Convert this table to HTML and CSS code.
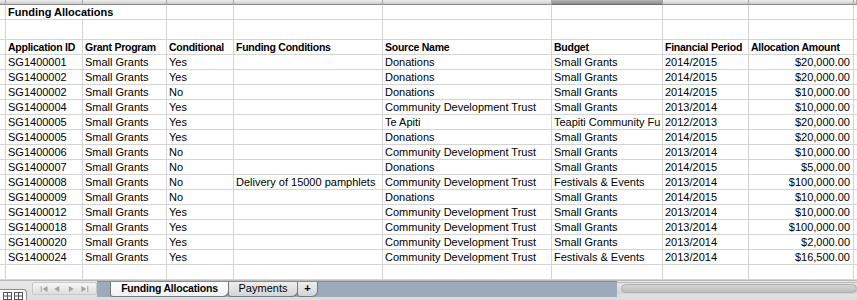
FILE: index.html
```html
<!DOCTYPE html>
<html>
<head>
<meta charset="utf-8">
<link rel="stylesheet" href="styles.css">
</head>
<body>
<div class="sheet">
  <div class="colhead">
    <div></div><div></div><div></div><div></div><div></div><div></div><div class="sel"></div><div></div><div></div><div class="last"></div>
  </div>
  <div class="row">
    <div></div><div class="span2 b">Funding Allocations</div><div></div><div></div><div></div><div></div><div></div><div></div><div class="last"></div>
  </div>
  <div class="row tall">
    <div></div><div></div><div></div><div></div><div></div><div></div><div></div><div></div><div></div><div class="last"></div>
  </div>
  <div class="row b head">
    <div></div><div>Application ID</div><div>Grant Program</div><div>Conditional</div><div>Funding Conditions</div><div>Source Name</div><div>Budget</div><div>Financial Period</div><div>Allocation Amount</div><div class="last"></div>
  </div>
  <div class="row"><div></div><div>SG1400001</div><div>Small Grants</div><div>Yes</div><div></div><div>Donations</div><div>Small Grants</div><div>2014/2015</div><div class="num">$20,000.00</div><div class="last"></div></div>
  <div class="row"><div></div><div>SG1400002</div><div>Small Grants</div><div>Yes</div><div></div><div>Donations</div><div>Small Grants</div><div>2014/2015</div><div class="num">$20,000.00</div><div class="last"></div></div>
  <div class="row"><div></div><div>SG1400002</div><div>Small Grants</div><div>No</div><div></div><div>Donations</div><div>Small Grants</div><div>2014/2015</div><div class="num">$10,000.00</div><div class="last"></div></div>
  <div class="row"><div></div><div>SG1400004</div><div>Small Grants</div><div>Yes</div><div></div><div>Community Development Trust</div><div>Small Grants</div><div>2013/2014</div><div class="num">$10,000.00</div><div class="last"></div></div>
  <div class="row"><div></div><div>SG1400005</div><div>Small Grants</div><div>Yes</div><div></div><div>Te Apiti</div><div>Teapiti Community Fu</div><div>2012/2013</div><div class="num">$20,000.00</div><div class="last"></div></div>
  <div class="row"><div></div><div>SG1400005</div><div>Small Grants</div><div>Yes</div><div></div><div>Donations</div><div>Small Grants</div><div>2014/2015</div><div class="num">$20,000.00</div><div class="last"></div></div>
  <div class="row"><div></div><div>SG1400006</div><div>Small Grants</div><div>No</div><div></div><div>Community Development Trust</div><div>Small Grants</div><div>2013/2014</div><div class="num">$10,000.00</div><div class="last"></div></div>
  <div class="row"><div></div><div>SG1400007</div><div>Small Grants</div><div>No</div><div></div><div>Donations</div><div>Small Grants</div><div>2014/2015</div><div class="num">$5,000.00</div><div class="last"></div></div>
  <div class="row"><div></div><div>SG1400008</div><div>Small Grants</div><div>No</div><div>Delivery of 15000 pamphlets</div><div>Community Development Trust</div><div>Festivals &amp; Events</div><div>2013/2014</div><div class="num">$100,000.00</div><div class="last"></div></div>
  <div class="row"><div></div><div>SG1400009</div><div>Small Grants</div><div>No</div><div></div><div>Donations</div><div>Small Grants</div><div>2014/2015</div><div class="num">$10,000.00</div><div class="last"></div></div>
  <div class="row"><div></div><div>SG1400012</div><div>Small Grants</div><div>Yes</div><div></div><div>Community Development Trust</div><div>Small Grants</div><div>2013/2014</div><div class="num">$10,000.00</div><div class="last"></div></div>
  <div class="row"><div></div><div>SG1400018</div><div>Small Grants</div><div>Yes</div><div></div><div>Community Development Trust</div><div>Small Grants</div><div>2013/2014</div><div class="num">$100,000.00</div><div class="last"></div></div>
  <div class="row"><div></div><div>SG1400020</div><div>Small Grants</div><div>Yes</div><div></div><div>Community Development Trust</div><div>Small Grants</div><div>2013/2014</div><div class="num">$2,000.00</div><div class="last"></div></div>
  <div class="row"><div></div><div>SG1400024</div><div>Small Grants</div><div>Yes</div><div></div><div>Community Development Trust</div><div>Festivals &amp; Events</div><div>2013/2014</div><div class="num">$16,500.00</div><div class="last"></div></div>
  <div class="row">
    <div></div><div></div><div></div><div></div><div></div><div></div><div></div><div></div><div></div><div class="last"></div>
  </div>

  <div class="tabbar">
    <div class="views">
      <svg width="22" height="8" viewBox="0 0 22 8"><g fill="none" stroke="#555" stroke-width="1"><rect x="0.5" y="0.5" width="8" height="7"/><path d="M4.5 0.5v7M0.5 4h8"/><rect x="11.5" y="0.5" width="8" height="7"/><path d="M15.5 0.5v7M11.5 4h8"/></g></svg>
    </div>
    <div class="nav">
      <svg width="65" height="13" viewBox="0 0 65 13"><g fill="#a3a3a3"><rect x="8" y="4" width="1" height="6"/><path d="M15 4l-5 3 5 3z"/><path d="M27 4l-5 3 5 3z"/><path d="M37 4l5 3-5 3z"/><path d="M50 4l5 3-5 3z"/><rect x="56" y="4" width="1" height="6"/></g></svg>
    </div>
    <div class="strip">
      <div class="tab active">Funding Allocations</div>
      <div class="tab pay">Payments</div>
      <div class="tab plus">+</div>
    </div>
    <div class="hscroll"><div class="thumb"></div></div>
  </div>
</div>
</body>
</html>
```
FILE: styles.css
```css
html, body {
  margin: 0;
  padding: 0;
}
body {
  font-family: "Liberation Sans", Arial, sans-serif;
  font-size: 11px;
  color: #000;
  background: #fff;
  width: 857px;
  height: 300px;
  overflow: hidden;
}
.sheet {
  display: flex;
  flex-direction: column;
}
.colhead, .row {
  display: grid;
  grid-template-columns: 6px 77px 84px 67px 149px 169px 111px 86px 105px 1fr;
}
.colhead {
  height: 5px;
}
.colhead > div {
  box-sizing: border-box;
  border-right: 1px solid #a8a8a8;
  border-bottom: 1px solid #8a8a8a;
  background: linear-gradient(#ececec, #cdcdcd);
}
.colhead > div.sel {
  background: linear-gradient(#b4b4b4, #8c8c8c);
  border-bottom-color: #6a6a6a;
}
.row {
  height: 15px;
}
.row.tall {
  height: 20px;
}
.row > div {
  box-sizing: border-box;
  border-right: 1px solid #d4d4d4;
  border-bottom: 1px solid #d4d4d4;
  padding: 0 2px;
  line-height: 14px;
  white-space: nowrap;
  overflow: hidden;
}
.row > div:first-child {
  padding: 0;
}
.row > div.last {
  border-right: none;
}
.row > .span2 {
  grid-column: span 2;
}
.b {
  font-weight: bold;
}
.head {
  font-size: 10.5px;
  letter-spacing: -0.25px;
}
.row > .num {
  text-align: right;
  padding-right: 3px;
}
.tabbar {
  display: flex;
  height: 20px;
  background: linear-gradient(#e9e9e9, #dcdcdc);
  border-top: 1px solid #b9b9b9;
  box-sizing: border-box;
}
.views {
  width: 27px;
  height: 11px;
  margin-top: auto;
  box-sizing: border-box;
  background: #fbfbfb;
  border-top: 1px solid #8e8e8e;
  border-right: 1px solid #8e8e8e;
  border-top-right-radius: 4px;
  padding: 2px 0 0 3px;
  display: flex;
}
.nav {
  width: 65px;
  height: 13px;
  margin: 1px 0 0 5px;
  background: linear-gradient(#f6f6f6, #dedede);
  border: 1px solid #c8c8c8;
  border-radius: 2px;
  box-sizing: border-box;
  display: flex;
  align-items: center;
}
.strip {
  width: 520px;
  height: 16px;
  background: #9cabbc;
  border-top: 1px solid #7f8ea0;
  box-sizing: border-box;
  display: flex;
  padding-left: 13px;
}
.tab {
  height: 15px;
  box-sizing: border-box;
  line-height: 13px;
  text-align: center;
  white-space: nowrap;
  border: 1px solid #6f7b88;
  border-top: none;
  border-radius: 0 0 6px 3px;
  background: linear-gradient(#eeeeee, #d4d4d4);
  margin-right: -1px;
  font-size: 11px;
}
.tab.active {
  width: 119px;
  font-weight: bold;
  background: linear-gradient(#ffffff, #f1f1f1);
  font-size: 10.5px;
  letter-spacing: -0.2px;
}
.tab.pay {
  width: 70px;
}
.tab.plus {
  width: 21px;
  font-weight: bold;
}
.hscroll {
  flex: 1;
  height: 12px;
  margin-top: 1px;
  background: linear-gradient(#e6e6e6, #d2d2d2);
  box-sizing: border-box;
  border-top: 1px solid #b8b8b8;
  padding: 1px 0 0 4px;
}
.thumb {
  height: 9px;
  border-radius: 5px;
  background: linear-gradient(#d6d6d6, #bcbcbc);
  border: 1px solid #b0b0b0;
  box-sizing: border-box;
}
```
